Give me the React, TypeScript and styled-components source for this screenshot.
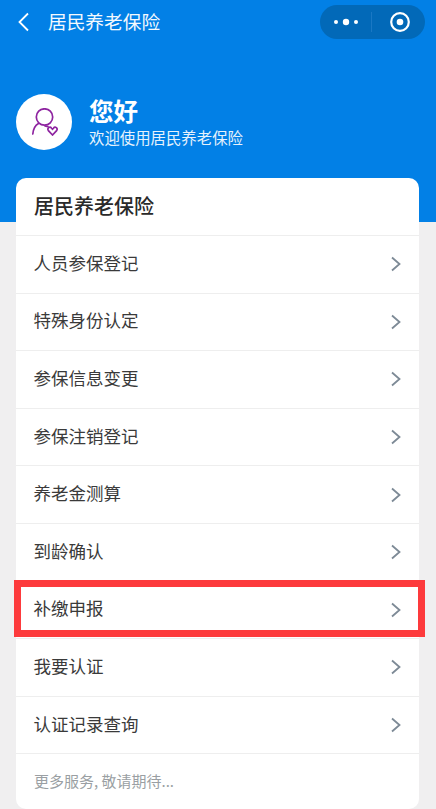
import React from "react";
import styled, { createGlobalStyle } from "styled-components";

const Global = createGlobalStyle`
  html, body { margin: 0; padding: 0; background: #f0eff0; }
  body { font-family: "Noto Sans CJK SC", "Noto Sans", sans-serif; }
  * { box-sizing: border-box; }
`;

const Page = styled.div`
  width: 436px;
  height: 809px;
  overflow: hidden;
  position: relative;
  background: #f0eff0;
`;

const Hero = styled.header`
  height: 222px;
  background: #0280e6;
  display: flex;
  flex-direction: column;
`;

const NavBar = styled.div`
  height: 44px;
  display: flex;
  align-items: center;
  padding: 0 11px 0 17px;
  color: #fff;
`;

const NavTitle = styled.div`
  font-size: 18.7px;
  line-height: 24px;
  margin-left: 18px;
  margin-top: -2px;
  flex: 1;
  color: #f4f9fe;
`;

const Capsule = styled.div`
  width: 105px;
  height: 34px;
  border-radius: 17px;
  background: #0269b8;
  display: flex;
  align-items: center;
`;

const CapsuleHalf = styled.div<{ $nudge?: number }>`
  flex: 1;
  height: 100%;
  display: flex;
  align-items: center;
  justify-content: center;
  padding-left: ${(p) => p.$nudge ?? 0}px;
`;

const CapsuleDivider = styled.div`
  width: 1px;
  height: 20px;
  background: #1a78c4;
`;

const Greeting = styled.div`
  display: flex;
  align-items: center;
  padding: 50px 0 0 16px;
`;

const Avatar = styled.div`
  width: 56px;
  height: 56px;
  border-radius: 50%;
  background: #fff;
  display: flex;
  align-items: center;
  justify-content: center;
`;

const GreetingText = styled.div`
  margin-left: 17px;
  margin-top: -3px;
  color: #fff;
`;

const Hello = styled.div`
  font-size: 24.5px;
  font-weight: 700;
  line-height: 33px;
`;

const Welcome = styled.div`
  font-size: 15.4px;
  line-height: 20px;
  color: #e6f2fc;
`;

const Card = styled.section`
  position: absolute;
  top: 178px;
  left: 16px;
  width: 403px;
  height: 631px;
  background: #fff;
  border-radius: 10px;
`;

const CardTitle = styled.h2`
  margin: 0;
  height: 57px;
  padding: 0 0 2px 18px;
  display: flex;
  align-items: center;
  font-size: 20px;
  font-weight: 500;
  color: #2a2a2a;
`;

const Row = styled.div<{ $flagged?: boolean }>`
  position: relative;
  height: 57.6px;
  border-top: 1px solid ${(p) => (p.$flagged ? "transparent" : "#eeeeee")};
  padding: 0 18px 0 17.5px;
  display: flex;
  align-items: center;
  justify-content: space-between;
  font-size: 17.5px;
  color: #3a3a3a;
`;

const RowLabel = styled.span`
  margin-top: -4px;
`;

const Highlight = styled.div`
  position: absolute;
  left: -2px;
  right: -6px;
  top: -2px;
  height: 57.4px;
  border: 7px solid #fd3a3c;
`;

const Footer = styled.div`
  border-top: 1px solid #eeeeee;
  height: 56px;
  padding: 0 0 3px 18px;
  display: flex;
  align-items: center;
  font-size: 15px;
  color: #9a9fa3;
`;

const Chevron = () => (
  <svg width="12" height="16" viewBox="0 0 12 16" fill="none" style={{ marginRight: -1 }}>
    <path d="M2 1.5 L9.5 8 L2 14.5" stroke="#7d8a96" strokeWidth="1.8" />
  </svg>
);

const items = ["人员参保登记", "特殊身份认定", "参保信息变更", "参保注销登记", "养老金测算", "到龄确认", "补缴申报", "我要认证", "认证记录查询"];

export default function App() {
  return (
    <Page>
      <Global />
      <Hero>
        <NavBar>
          <svg width="13" height="20" viewBox="0 0 13 20" fill="none">
            <path d="M11 1.5 L2.5 10 L11 18.5" stroke="#fff" strokeWidth="1.8" />
          </svg>
          <NavTitle>居民养老保险</NavTitle>
          <Capsule>
            <CapsuleHalf>
              <svg width="28" height="8" viewBox="0 0 28 8" fill="#fff">
                <circle cx="4" cy="4" r="2" />
                <circle cx="14" cy="4" r="3.2" />
                <circle cx="24" cy="4" r="2" />
              </svg>
            </CapsuleHalf>
            <CapsuleDivider />
            <CapsuleHalf $nudge={2}>
              <svg width="22" height="22" viewBox="0 0 22 22" fill="none">
                <circle cx="11" cy="11" r="8.8" stroke="#fff" strokeWidth="2.2" />
                <circle cx="11" cy="11" r="3.3" fill="#fff" />
              </svg>
            </CapsuleHalf>
          </Capsule>
        </NavBar>
        <Greeting>
          <Avatar>
            <svg width="28" height="28" viewBox="0 0 28 28" fill="none" stroke="#8e24a0" strokeWidth="1.7" strokeLinecap="round">
              <circle cx="14.5" cy="9" r="8.2" />
              <path d="M8.5 15.5 C5 17.5 3.2 21.5 2.8 26" />
              <path d="M15 18 L18 18.6" />
              <path d="M22.5 27 L18.4 22.6 C16.8 20.2 19.8 18 21.6 20.2 L22.5 21.2 L23.4 20.2 C25.2 18 28.2 20.2 26.6 22.6 Z" />
            </svg>
          </Avatar>
          <GreetingText>
            <Hello>您好</Hello>
            <Welcome>欢迎使用居民养老保险</Welcome>
          </GreetingText>
        </Greeting>
      </Hero>
      <Card>
        <CardTitle>居民养老保险</CardTitle>
        {items.map((label) => {
          const flagged = label === "补缴申报";
          return (
            <Row key={label} $flagged={flagged}>
              <RowLabel>{label}</RowLabel>
              <Chevron />
              {flagged && <Highlight />}
            </Row>
          );
        })}
        <Footer>更多服务, 敬请期待...</Footer>
      </Card>
    </Page>
  );
}
